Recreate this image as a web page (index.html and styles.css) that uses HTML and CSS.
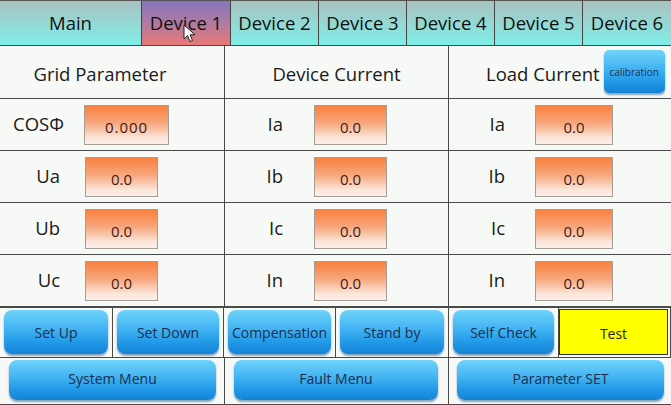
FILE: index.html
```html
<!DOCTYPE html>
<html>
<head>
<meta charset="utf-8">
<link rel="stylesheet" href="styles.css">
</head>
<body>
<div class="screen">
  <nav class="tabs">
    <div class="tab">Main</div>
    <div class="tab active">Device 1
      <svg class="cursor" width="14" height="20" viewBox="0 0 14 20"><path d="M1 1 L1 15 L4.5 11.5 L7 17.5 L9.5 16.5 L7 10.8 L12 10.8 Z" fill="#fff" stroke="#222" stroke-width="1"/></svg>
    </div>
    <div class="tab">Device 2</div>
    <div class="tab">Device 3</div>
    <div class="tab">Device 4</div>
    <div class="tab">Device 5</div>
    <div class="tab">Device 6</div>
  </nav>

  <section class="table">
    <div class="cell head grid">Grid Parameter</div>
    <div class="cell head">Device Current</div>
    <div class="cell head load">Load Current <span class="btn calib">calibration</span></div>

    <div class="cell row1"><span class="lbl cos">COSΦ</span><span class="val wide">0.000</span></div>
    <div class="cell row2"><span class="lbl">Ia</span><span class="val">0.0</span></div>
    <div class="cell row3"><span class="lbl">Ia</span><span class="val big">0.0</span></div>

    <div class="cell row1"><span class="lbl u">Ua</span><span class="val">0.0</span></div>
    <div class="cell row2"><span class="lbl">Ib</span><span class="val">0.0</span></div>
    <div class="cell row3"><span class="lbl">Ib</span><span class="val big">0.0</span></div>

    <div class="cell row1"><span class="lbl u">Ub</span><span class="val">0.0</span></div>
    <div class="cell row2"><span class="lbl">Ic</span><span class="val">0.0</span></div>
    <div class="cell row3"><span class="lbl">Ic</span><span class="val big">0.0</span></div>

    <div class="cell row1"><span class="lbl u">Uc</span><span class="val">0.0</span></div>
    <div class="cell row2"><span class="lbl">In</span><span class="val">0.0</span></div>
    <div class="cell row3"><span class="lbl">In</span><span class="val big">0.0</span></div>
  </section>

  <section class="actions">
    <div class="acell"><span class="btn">Set Up</span></div>
    <div class="acell"><span class="btn">Set Down</span></div>
    <div class="acell"><span class="btn">Compensation</span></div>
    <div class="acell"><span class="btn">Stand by</span></div>
    <div class="acell"><span class="btn">Self Check</span></div>
    <div class="acell"><span class="test">Test</span></div>
  </section>

  <section class="menus">
    <div class="mcell"><span class="btn">System Menu</span></div>
    <div class="mcell"><span class="btn">Fault Menu</span></div>
    <div class="mcell"><span class="btn">Parameter SET</span></div>
  </section>
</div>
</body>
</html>
```

FILE: styles.css
```css
html, body {
  margin: 0;
  padding: 0;
  background: #f6f8f6;
}
.screen {
  width: 671px;
  height: 405px;
  overflow: hidden;
  font-family: "Open Sans", "Noto Sans", sans-serif;
  color: #1a1a1a;
  background: #4a4a4a;
  display: flex;
  flex-direction: column;
}
.tabs {
  display: grid;
  grid-template-columns: 141px 88px 87px 87px 87px 87px 88px;
  column-gap: 1px;
  height: 45px;
  box-sizing: border-box;
  border-top: 1px solid #555;
  background: #444;
  flex: none;
}
.tab {
  position: relative;
  display: flex;
  align-items: center;
  justify-content: center;
  font-size: 18.5px;
  color: #111;
  padding-bottom: 1px;
  background: linear-gradient(#a9c2c0, #95d8d4 50%, #7eeee8);
}
.tab.active {
  background: linear-gradient(#8577bd, #b07aa0 50%, #ea7876);
}
.cursor {
  position: absolute;
  left: 41px;
  top: 23px;
}
.table {
  margin-top: 1px;
  display: grid;
  grid-template-columns: 224px 223px 222px;
  grid-template-rows: 52px 51px 51px 51px 51px;
  gap: 1px;
  padding-right: 1px;
  flex: none;
}
.cell {
  background: #f7f9f7;
  display: flex;
  align-items: center;
}
.head {
  justify-content: center;
  font-size: 18.5px;
  padding-top: 2px;
}
.head.grid {
  padding-right: 24px;
}
.head.load {
  position: relative;
  justify-content: flex-start;
  padding-left: 37px;
  gap: 4px;
}
.lbl {
  font-size: 18.5px;
  text-align: right;
  display: inline-block;
  padding-bottom: 2px;
}
.row1 .lbl { width: 60px; }
.row1 .lbl.cos { width: 64px; }
.row2 .lbl { width: 58px; }
.row3 .lbl { width: 56px; }
.row1 .val { margin-left: 25px; }
.row1 .lbl.cos + .val { margin-left: 20px; }
.row2 .val { margin-left: 31px; }
.row3 .val { margin-left: 30px; }
.val {
  width: 73px;
  height: 40px;
  box-sizing: border-box;
  border: 1px solid #a59d96;
  background: linear-gradient(#f9803f, #f7a77e 45%, #fbe6dc 85%, #fcefe9);
  display: flex;
  align-items: center;
  justify-content: center;
  font-size: 15px;
  color: #3f1a10;
  padding-top: 4px;
}
.val.wide {
  width: 85px;
  letter-spacing: 1px;
}
.val.big {
  width: 78px;
}
.btn {
  display: flex;
  align-items: center;
  justify-content: center;
  border-radius: 8px;
  background: linear-gradient(#70d3f9, #40b2f2 45%, #2098e6 75%, #1581d6);
  box-shadow: 0 2px 2px rgba(0, 60, 110, 0.45);
  color: #1b2e4e;
  font-size: 14px;
  font-weight: 500;
}
.calib {
  width: 61px;
  height: 43px;
  font-size: 10px;
  font-weight: 400;
  border-radius: 5px;
  margin-top: -3px;
}
.actions {
  margin-top: 2px;
  display: grid;
  grid-template-columns: 112px 110px 111px 112px 109px 111px;
  gap: 1px;
  height: 49px;
  flex: none;
}
.acell {
  background: #f7f9f7;
  display: flex;
  padding: 2px 4px 3px 4px;
}
.acell .btn {
  flex: 1;
}
.acell:last-child {
  padding: 1px 2px 2px 0;
}
.test {
  flex: 1;
  background: #ffff00;
  border: 1px solid #333;
  display: flex;
  align-items: center;
  justify-content: center;
  font-size: 14px;
  font-weight: 500;
  color: #222;
  padding-top: 2px;
}
.menus {
  margin-top: 1px;
  display: grid;
  grid-template-columns: 224px 223px 222px;
  gap: 1px;
  height: 46px;
  flex: none;
}
.mcell {
  background: #f7f9f7;
  display: flex;
  padding: 2px 8px 4px 9px;
}
.mcell:nth-child(2) { padding-left: 9px; padding-right: 10px; }
.mcell:nth-child(3) { padding-left: 8px; padding-right: 7px; }
.mcell .btn {
  flex: 1;
  padding-bottom: 3px;
}
```
